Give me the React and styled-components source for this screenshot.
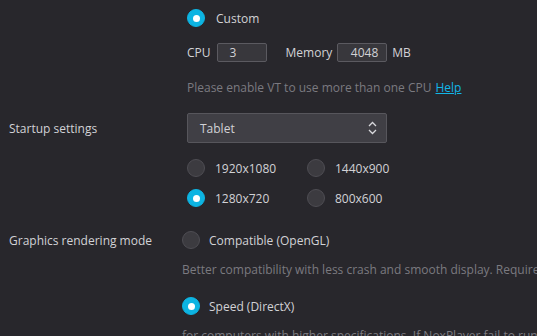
import styled, { createGlobalStyle } from "styled-components";

const Global = createGlobalStyle`
  html, body {
    margin: 0;
    background: #28272c;
  }
  body {
    font-family: "Open Sans", "DejaVu Sans", sans-serif;
    font-size: 12px;
    color: #d2d2d6;
    overflow: hidden;
  }
`;

const Page = styled.div`
  width: 537px;
  height: 336px;
  overflow: hidden;
  display: flex;
  flex-direction: column;
`;

const Section = styled.div`
  display: grid;
  grid-template-columns: ${(p) => p.$col || 187}px 1fr;
  margin-top: ${(p) => p.$top || 0}px;
`;

const Label = styled.div`
  padding-left: 9px;
  height: ${(p) => p.$h || 20}px;
  display: flex;
  align-items: center;
`;

const Controls = styled.div`
  display: flex;
  flex-direction: column;
  min-width: 0;
`;

const Row = styled.div`
  display: flex;
  align-items: center;
  height: ${(p) => p.$h || 20}px;
  margin-top: ${(p) => p.$top || 0}px;
  white-space: nowrap;
`;

const RadioCircle = styled.span`
  width: 18px;
  height: 18px;
  box-sizing: border-box;
  border-radius: 50%;
  flex: none;
  display: flex;
  align-items: center;
  justify-content: center;
  background: ${(p) => (p.$on ? "#0db4e2" : "#3c3b40")};
  border: 1px solid ${(p) => (p.$on ? "#0db4e2" : "#4e4d53")};
  &::after {
    content: "";
    display: ${(p) => (p.$on ? "block" : "none")};
    width: 7px;
    height: 7px;
    border-radius: 50%;
    background: #fff;
  }
`;

const RadioItem = styled.div`
  display: flex;
  align-items: center;
  gap: ${(p) => p.$gap || 10}px;
  width: ${(p) => (p.$w ? p.$w + "px" : "auto")};
`;

const Radio = ({ on, children, w, gap }) => (
  <RadioItem $w={w} $gap={gap}>
    <RadioCircle $on={on} />
    <span>{children}</span>
  </RadioItem>
);

const Field = styled.div`
  width: 50px;
  height: 19px;
  box-sizing: border-box;
  border: 1px solid #5b5a60;
  border-radius: 2px;
  background: #38373c;
  display: flex;
  align-items: center;
  justify-content: ${(p) => (p.$right ? "flex-end" : "flex-start")};
  padding: 0 ${(p) => (p.$right ? 8 : 0)}px 0 ${(p) => (p.$right ? 0 : 12)}px;
  margin: 0 ${(p) => p.$mr || 0}px 0 ${(p) => p.$ml || 0}px;
`;

const Hint = styled.div`
  color: #7b7a80;
  height: 20px;
  display: flex;
  align-items: center;
  white-space: nowrap;
  margin-top: ${(p) => p.$top || 0}px;
`;

const Link = styled.a`
  color: #12b6e8;
  text-decoration: underline;
  margin-left: 4px;
  cursor: pointer;
`;

const Select = styled.div`
  width: 200px;
  height: 30px;
  box-sizing: border-box;
  border: 1px solid #57565c;
  border-radius: 2px;
  background: #403f45;
  display: flex;
  align-items: center;
  justify-content: space-between;
  padding: 0 9px 0 12px;
`;

const Chevrons = () => (
  <svg width="9" height="14" viewBox="0 0 9 14" fill="none" stroke="#d8d8dc" strokeWidth="1.3">
    <path d="M1 5 L4.5 1.5 L8 5" />
    <path d="M1 9 L4.5 12.5 L8 9" />
  </svg>
);

export default function App() {
  return (
    <Page>
      <Global />
      <Section $top={8}>
        <div />
        <Controls>
          <Row $h={20}>
            <Radio on gap={11}>Custom</Radio>
          </Row>
          <Row $h={20} $top={14}>
            <span>CPU</span>
            <Field $ml={6} $mr={19}>3</Field>
            <span>Memory</span>
            <Field $right $ml={5} $mr={5}>4048</Field>
            <span>MB</span>
          </Row>
          <Hint $top={15}>
            Please enable VT to use more than one CPU<Link>Help</Link>
          </Hint>
        </Controls>
      </Section>

      <Section $top={16}>
        <Label $h={30}>Startup settings</Label>
        <Controls>
          <Select>
            <span>Tablet</span>
            <Chevrons />
          </Select>
          <Row $h={20} $top={15}>
            <Radio w={120}>1920x1080</Radio>
            <Radio>1440x900</Radio>
          </Row>
          <Row $h={20} $top={10}>
            <Radio on w={120}>1280x720</Radio>
            <Radio>800x600</Radio>
          </Row>
        </Controls>
      </Section>

      <Section $top={22} $col={182}>
        <Label>Graphics rendering mode</Label>
        <Controls>
          <Row $h={20}>
            <Radio gap={9}>Compatible (OpenGL)</Radio>
          </Row>
          <Hint $top={9}>
            Better compatibility with less crash and smooth display. Requires higher GPU
          </Hint>
          <Row $h={20} $top={17}>
            <Radio on gap={9}>Speed (DirectX)</Radio>
          </Row>
          <Hint $top={9}>
            for computers with higher specifications. If NoxPlayer fail to run
          </Hint>
        </Controls>
      </Section>
    </Page>
  );
}
